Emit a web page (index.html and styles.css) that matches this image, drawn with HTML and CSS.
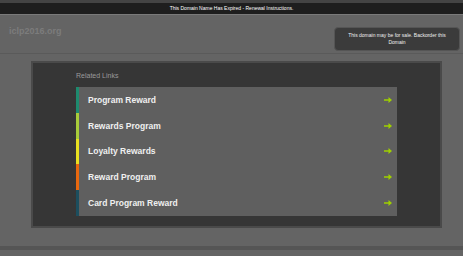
FILE: index.html
```html
<!DOCTYPE html>
<html lang="en">
<head>
    <meta charset="UTF-8">
    <meta name="viewport" content="width=device-width, initial-scale=1.0">
    <title>iclp2016.org</title>
    <link rel="stylesheet" href="styles.css">
</head>
<body>
    <div class="topbar">This Domain Name Has Expired - Renewal Instructions.</div>

    <div class="header">
        <div class="logo">iclp2016.org</div>
        <div class="sale-box">This domain may be for sale. Backorder this Domain</div>
    </div>

    <div class="panel">
        <div class="panel-title">Related Links</div>
        <ul class="links">
            <li class="link c1"><span>Program Reward</span><svg class="arrow" width="8" height="6" viewBox="0 0 8 6"><path d="M0 2.3h4.5V0L8 3 4.5 6V3.7H0z" fill="#9fd000"/></svg></li>
            <li class="link c2"><span>Rewards Program</span><svg class="arrow" width="8" height="6" viewBox="0 0 8 6"><path d="M0 2.3h4.5V0L8 3 4.5 6V3.7H0z" fill="#9fd000"/></svg></li>
            <li class="link c3"><span>Loyalty Rewards</span><svg class="arrow" width="8" height="6" viewBox="0 0 8 6"><path d="M0 2.3h4.5V0L8 3 4.5 6V3.7H0z" fill="#9fd000"/></svg></li>
            <li class="link c4"><span>Reward Program</span><svg class="arrow" width="8" height="6" viewBox="0 0 8 6"><path d="M0 2.3h4.5V0L8 3 4.5 6V3.7H0z" fill="#9fd000"/></svg></li>
            <li class="link c5"><span>Card Program Reward</span><svg class="arrow" width="8" height="6" viewBox="0 0 8 6"><path d="M0 2.3h4.5V0L8 3 4.5 6V3.7H0z" fill="#9fd000"/></svg></li>
        </ul>
    </div>

    <div class="footer"></div>
</body>
</html>
```

FILE: styles.css
```css
body {
    font-family: "Liberation Sans", Arial, sans-serif;
    background-color: #646464;
    margin: 0;
    padding: 0;
    height: 256px;
    overflow: hidden;
}

.topbar {
    background-color: #1e1e1e;
    border-top: 3px solid #444;
    border-bottom: 1px solid #7a7a7a;
    height: 11px;
    line-height: 11px;
    font-size: 5px;
    color: #fff;
    text-align: center;
}

.header {
    display: flex;
    justify-content: space-between;
    align-items: flex-start;
    height: 38px;
    padding: 0 3px 0 9px;
    border-bottom: 1px solid #5a5a5a;
}

.logo {
    margin-top: 11px;
    font-size: 9px;
    font-weight: bold;
    color: #7c7c7c;
}

.sale-box {
    margin-top: 12px;
    width: 112px;
    height: 22px;
    padding: 0 6px;
    box-sizing: content-box;
    display: flex;
    align-items: center;
    justify-content: center;
    text-align: center;
    background-color: #3b3b3b;
    border: 1px solid #555;
    border-radius: 4px;
    font-size: 5px;
    line-height: 7px;
    color: #f0f0f0;
}

.panel {
    margin: 7px 21px 0 31px;
    background-color: #363636;
    border: 2px solid #4a4a4a;
    padding: 8px 43px 10px 43px;
}

.panel-title {
    font-size: 7px;
    line-height: 9px;
    color: #9a9a9a;
    margin-bottom: 7px;
}

.links {
    list-style: none;
    margin: 0;
    padding: 0;
    background-color: #5f5f5f;
}

.link {
    display: flex;
    align-items: center;
    justify-content: space-between;
    height: 25.8px;
    padding: 0 5px 0 9px;
    border-left: 3px solid #1e8a6e;
    font-size: 8.5px;
    font-weight: bold;
    color: #f0f0f0;
}

.c2 { border-left-color: #a8cc3a; }
.c3 { border-left-color: #e8e020; }
.c4 { border-left-color: #e8680e; }
.c5 { border-left-color: #1c4e5e; }

.arrow {
    display: block;
}

.footer {
    margin-top: 18px;
    height: 4px;
    background-color: #555;
}
```
